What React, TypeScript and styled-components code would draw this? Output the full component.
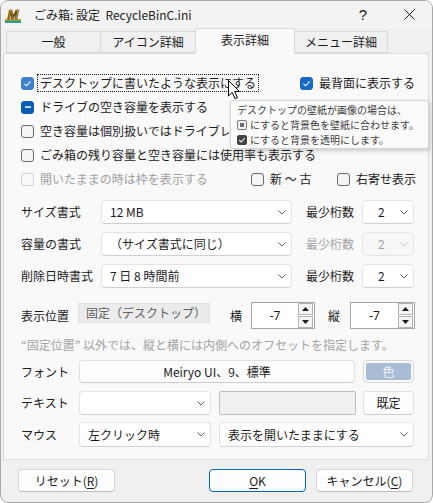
import React from "react";
import styled, { createGlobalStyle, css } from "styled-components";

const FONT = `"Noto Sans CJK JP", "Noto Sans", sans-serif`;

const Global = createGlobalStyle`
  html, body { margin: 0; padding: 0; background: #ffffff; }
  body { font-family: ${FONT}; font-size: 12px; color: #1b1b1b; }
  * { box-sizing: border-box; }
`;

const Window = styled.div`
  position: relative;
  width: 433px;
  height: 503px;
  background: #f0f0f0;
  border: 1px solid #a9a9a9;
  border-radius: 8px;
  display: flex;
  flex-direction: column;
  overflow: hidden;
`;

const TitleBar = styled.div`
  height: 27px;
  flex: none;
  display: flex;
  align-items: center;
  padding-left: 4px;
  background: #f3f3f3;
`;

const TitleText = styled.span`
  margin-left: 13px;
  white-space: pre;
  font-size: 12px;
  line-height: 16px;
  color: #1b1b1b;
`;

const Spacer = styled.div`
  flex: 1;
`;

const CaptionButton = styled.div`
  width: 46px;
  height: 27px;
  display: flex;
  align-items: center;
  justify-content: center;
  font-family: "Liberation Sans", sans-serif;
  font-size: 15px;
  color: #1b1b1b;
`;

const TabStrip = styled.div`
  height: 25px;
  flex: none;
  display: flex;
  align-items: flex-end;
  padding-left: 5px;
`;

const Tab = styled.div<{ $active?: boolean; $w: number }>`
  position: relative;
  width: ${(p) => p.$w}px;
  height: ${(p) => (p.$active ? 26 : 22)}px;
  margin-bottom: ${(p) => (p.$active ? -1 : 0)}px;
  z-index: ${(p) => (p.$active ? 2 : 1)};
  background: ${(p) => (p.$active ? "#f9f9f9" : "#f0f0f0")};
  border: 1px solid #d9d9d9;
  border-bottom: ${(p) => (p.$active ? "none" : "1px solid #d9d9d9")};
  display: flex;
  align-items: center;
  justify-content: center;
  padding-bottom: ${(p) => (p.$active ? 3 : 0)}px;
  font-size: 12px;
  line-height: 16px;
  color: #1b1b1b;
  & + & {
    margin-left: -1px;
  }
`;

const Panel = styled.div`
  position: relative;
  z-index: 1;
  margin: 0 3px 0 2px;
  height: 407px;
  flex: none;
  background: #f9f9f9;
  border: 1px solid #dcdcdc;
  padding: 17px 13px 0 17px;
  display: flex;
  flex-direction: column;
`;

const CheckRow = styled.div<{ $cols?: string; $clip?: number }>`
  height: 24px;
  display: grid;
  grid-template-columns: ${(p) => p.$cols || "auto"};
  align-items: center;
  white-space: nowrap;
  ${(p) =>
    p.$clip
      ? css`
          width: ${p.$clip}px;
          overflow: hidden;
        `
      : ""}
`;

const CheckItem = styled.div`
  display: flex;
  align-items: center;
  min-width: 0;
`;

type BoxState = "on" | "mixed" | "off";

const Box = styled.span<{ $state: BoxState; $tone?: string; $disabled?: boolean }>`
  width: 13px;
  height: 13px;
  flex: none;
  border-radius: 3px;
  display: inline-flex;
  align-items: center;
  justify-content: center;
  ${(p) =>
    p.$state === "off"
      ? css`
          background: ${p.$disabled ? "#f9f9f9" : "#f4f4f4"};
          border: 1px solid ${p.$disabled ? "#cfcfcf" : "#6a6a6a"};
        `
      : css`
          background: ${p.$tone || "#005fb8"};
          border: 1px solid ${p.$tone || "#005fb8"};
        `}
`;

const CheckText = styled.span<{ $focus?: boolean; $disabled?: boolean }>`
  margin-left: 3px;
  padding: 0 2px;
  border: 1px dotted ${(p) => (p.$focus ? "#1b1b1b" : "transparent")};
  line-height: 16px;
  color: ${(p) => (p.$disabled ? "#a0a0a0" : "#1b1b1b")};
`;

const Mark = ({ state }: { state: BoxState }) =>
  state === "on" ? (
    <svg width="9" height="9" viewBox="0 0 9 9">
      <polyline points="1.5,4.8 3.6,6.8 7.6,2.4" fill="none" stroke="#ffffff" strokeWidth="1.1" />
    </svg>
  ) : state === "mixed" ? (
    <svg width="8" height="8" viewBox="0 0 8 8">
      <rect x="1" y="3.3" width="6" height="1.5" fill="#ffffff" />
    </svg>
  ) : null;

const Check = ({
  state,
  tone,
  disabled,
  focus,
  children,
}: {
  state: BoxState;
  tone?: string;
  disabled?: boolean;
  focus?: boolean;
  children: React.ReactNode;
}) => (
  <CheckItem>
    <Box $state={state} $tone={tone} $disabled={disabled}>
      <Mark state={state} />
    </Box>
    <CheckText $focus={focus} $disabled={disabled}>
      {children}
    </CheckText>
  </CheckItem>
);

const FieldRow = styled.div<{ $mt: number; $h?: number }>`
  display: flex;
  align-items: center;
  margin-top: ${(p) => p.$mt}px;
  height: ${(p) => p.$h || 24}px;
  white-space: nowrap;
`;

const Label = styled.span<{ $w?: number; $ml?: number; $disabled?: boolean }>`
  flex: none;
  width: ${(p) => (p.$w ? `${p.$w}px` : "auto")};
  margin-left: ${(p) => p.$ml || 0}px;
  line-height: 16px;
  color: ${(p) => (p.$disabled ? "#a3a3a3" : "#1b1b1b")};
`;

const SelectBox = styled.div<{ $w: number; $ml?: number; $disabled?: boolean; $pad?: number }>`
  flex: none;
  width: ${(p) => p.$w}px;
  height: 100%;
  margin-left: ${(p) => p.$ml || 0}px;
  background: ${(p) => (p.$disabled ? "#f6f6f6" : "#ffffff")};
  border: 1px solid #e3e3e3;
  border-bottom-color: ${(p) => (p.$disabled ? "#e3e3e3" : "#d0d0d0")};
  border-radius: 4px;
  display: flex;
  align-items: center;
  padding: 0 5px 0 ${(p) => p.$pad ?? 8}px;
  color: ${(p) => (p.$disabled ? "#a3a3a3" : "#1b1b1b")};
  line-height: 16px;
`;

const SelectValue = styled.span`
  flex: 1;
  overflow: hidden;
`;

const Chevron = ({ light }: { light?: boolean }) => (
  <svg width="8" height="5" viewBox="0 0 8 5" style={{ flex: "none" }}>
    <polyline points="0.5,0.5 4,4 7.5,0.5" fill="none" stroke={light ? "#c4c4c4" : "#5f5f5f"} strokeWidth="1" />
  </svg>
);

const Select = ({
  w,
  ml,
  disabled,
  pad,
  children,
}: {
  w: number;
  ml?: number;
  disabled?: boolean;
  pad?: number;
  children?: React.ReactNode;
}) => (
  <SelectBox $w={w} $ml={ml} $disabled={disabled} $pad={pad}>
    <SelectValue>{children}</SelectValue>
    <Chevron light={disabled} />
  </SelectBox>
);

const ReadOnlyField = styled.div`
  flex: none;
  width: 132px;
  height: 20px;
  align-self: flex-start;
  margin-top: 1px;
  background: #ebebeb;
  border: 1px solid #e0e0e0;
  display: flex;
  align-items: center;
  padding-left: 7px;
  color: #606060;
  line-height: 16px;
`;

const SpinBox = styled.div<{ $w: number; $ml: number }>`
  flex: none;
  width: ${(p) => p.$w}px;
  height: 27px;
  margin-left: ${(p) => p.$ml}px;
  background: #ffffff;
  border: 1px solid #a6a6a6;
  display: flex;
`;

const SpinValue = styled.span`
  flex: 1;
  display: flex;
  align-items: center;
  justify-content: center;
  font-family: "Noto Sans", sans-serif;
  font-size: 12px;
`;

const SpinButtons = styled.div`
  width: 16px;
  flex: none;
  display: flex;
  flex-direction: column;
  gap: 1px;
  padding: 0 1px 0 0;
`;

const SpinBtn = styled.div`
  flex: 1;
  background: #f4f4f4;
  border: 1px solid #b4b4b4;
  display: flex;
  align-items: center;
  justify-content: center;
`;

const Arrow = ({ up }: { up?: boolean }) => (
  <svg width="7" height="4" viewBox="0 0 7 4">
    <polygon points={up ? "0,4 3.5,0 7,4" : "0,0 3.5,4 7,0"} fill="#1b1b1b" />
  </svg>
);

const Spin = ({ w, ml, value }: { w: number; ml: number; value: string }) => (
  <SpinBox $w={w} $ml={ml}>
    <SpinValue>{value}</SpinValue>
    <SpinButtons>
      <SpinBtn>
        <Arrow up />
      </SpinBtn>
      <SpinBtn>
        <Arrow />
      </SpinBtn>
    </SpinButtons>
  </SpinBox>
);

const Hint = styled.div`
  margin-top: 8px;
  line-height: 16px;
  color: #a3a3a3;
  white-space: nowrap;
`;

const PushButton = styled.div<{ $w: number; $ml?: number; $focus?: boolean }>`
  flex: none;
  width: ${(p) => p.$w}px;
  height: 100%;
  margin-left: ${(p) => p.$ml || 0}px;
  background: #fdfdfd;
  border: 1px solid ${(p) => (p.$focus ? "#0067c0" : "#e0e0e0")};
  border-bottom-color: ${(p) => (p.$focus ? "#0067c0" : "#cccccc")};
  border-radius: 4px;
  display: flex;
  align-items: center;
  justify-content: center;
  line-height: 16px;
  color: #1b1b1b;
`;

const ColorButton = styled.div`
  flex: none;
  width: 51px;
  height: 100%;
  margin-left: 8px;
  border: 1px solid #d6d6d6;
  border-radius: 4px;
  padding: 2px;
  display: flex;
`;

const ColorFill = styled.div`
  flex: 1;
  background: #a8bcd5;
  border-radius: 2px;
  display: flex;
  align-items: center;
  justify-content: center;
  color: #f4f6fa;
  line-height: 16px;
`;

const GreyField = styled.div`
  flex: none;
  width: 137px;
  height: 100%;
  margin-left: 8px;
  background: #f0f0f0;
  border: 1px solid #bdbdbd;
  border-radius: 2px;
`;

const Footer = styled.div`
  flex: 1;
  display: flex;
  align-items: center;
  padding: 0 19px 1px 17px;
`;

const FooterGroup = styled.div`
  margin-left: auto;
  display: flex;
  gap: 10px;
`;

const DialogButton = styled.div<{ $focus?: boolean }>`
  width: 97px;
  height: 23px;
  background: #fdfdfd;
  border: 1px solid ${(p) => (p.$focus ? "#0067c0" : "#d5d5d5")};
  border-bottom-color: ${(p) => (p.$focus ? "#0067c0" : "#bcbcbc")};
  border-radius: 4px;
  display: flex;
  align-items: center;
  justify-content: center;
  line-height: 16px;
  color: #1b1b1b;
  u {
    text-decoration: underline;
    text-underline-offset: 2px;
  }
`;

const Tooltip = styled.div`
  position: absolute;
  left: 229px;
  top: 99px;
  width: 199px;
  height: 49px;
  z-index: 5;
  background: #fbfbfb;
  border: 1px solid #d4d4d4;
  border-radius: 3px;
  box-shadow: 1px 2px 4px rgba(0, 0, 0, 0.18);
  padding: 1px 0 0 6px;
  font-size: 10px;
  line-height: 15px;
  color: #3e3e3e;
  white-space: nowrap;
`;

const TipLine = styled.div`
  display: flex;
  align-items: center;
  height: 15px;
`;

const TipBox = styled.span<{ $dark?: boolean }>`
  width: 10px;
  height: 10px;
  margin-right: 3px;
  flex: none;
  border-radius: 2px;
  border: 1px solid ${(p) => (p.$dark ? "#444444" : "#7a7a7a")};
  background: ${(p) => (p.$dark ? "#444444" : "#f4f4f4")};
  display: inline-flex;
  align-items: center;
  justify-content: center;
`;

const TipInner = styled.span`
  width: 4px;
  height: 4px;
  background: #6a6a6a;
`;

const Cursor = styled.svg`
  position: absolute;
  left: 227px;
  top: 79px;
  z-index: 6;
`;

const AppIcon = () => (
  <svg width="16" height="16" viewBox="0 0 16 16">
    <rect x="0" y="12" width="16" height="4" fill="#2f9e8a" />
    <rect x="0" y="12" width="16" height="1.4" fill="#e39a1a" />
    <text
      x="8"
      y="12"
      textAnchor="middle"
      fontFamily="Liberation Sans, sans-serif"
      fontWeight="bold"
      fontStyle="italic"
      fontSize="13"
      fill="#f4b418"
      stroke="#3a2800"
      strokeWidth="0.7"
    >
      M
    </text>
  </svg>
);

export default function App() {
  return (
    <>
      <Global />
      <Window>
        <TitleBar>
          <AppIcon />
          <TitleText>{"ごみ箱: 設定  RecycleBinC.ini"}</TitleText>
          <Spacer />
          <CaptionButton>?</CaptionButton>
          <CaptionButton>
            <svg width="11" height="11" viewBox="0 0 11 11">
              <path d="M0.5 0.5 L10.5 10.5 M10.5 0.5 L0.5 10.5" stroke="#1b1b1b" strokeWidth="1" />
            </svg>
          </CaptionButton>
        </TitleBar>

        <TabStrip>
          <Tab $w={95}>一般</Tab>
          <Tab $w={96}>アイコン詳細</Tab>
          <Tab $w={100} $active>
            表示詳細
          </Tab>
          <Tab $w={94}>メニュー詳細</Tab>
        </TabStrip>

        <Panel>
          <CheckRow $cols="279px auto">
            <Check state="on" tone="#3f80cd" focus>
              デスクトップに書いたような表示にする
            </Check>
            <Check state="on" tone="#1769c4">
              最背面に表示する
            </Check>
          </CheckRow>
          <CheckRow>
            <Check state="mixed" tone="#0a5db3">
              ドライブの空き容量を表示する
            </Check>
          </CheckRow>
          <CheckRow $clip={208}>
            <Check state="off">空き容量は個別扱いではドライブレターごとに表示する</Check>
          </CheckRow>
          <CheckRow>
            <Check state="off">ごみ箱の残り容量と空き容量には使用率も表示する</Check>
          </CheckRow>
          <CheckRow $cols="230px 86px auto">
            <Check state="off" disabled>
              開いたままの時は枠を表示する
            </Check>
            <Check state="off">新 ～ 古</Check>
            <Check state="off">右寄せ表示</Check>
          </CheckRow>

          <FieldRow $mt={9}>
            <Label $w={80}>サイズ書式</Label>
            <Select w={191}>12 MB</Select>
            <Label $w={48} $ml={14}>
              最少桁数
            </Label>
            <Select w={52} ml={8} pad={15}>
              2
            </Select>
          </FieldRow>
          <FieldRow $mt={8}>
            <Label $w={80}>容量の書式</Label>
            <Select w={191}>（サイズ書式に同じ）</Select>
            <Label $w={48} $ml={14} $disabled>
              最少桁数
            </Label>
            <Select w={52} ml={8} pad={15} disabled>
              2
            </Select>
          </FieldRow>
          <FieldRow $mt={8}>
            <Label $w={80}>削除日時書式</Label>
            <Select w={191}>7 日 8 時間前</Select>
            <Label $w={48} $ml={14}>
              最少桁数
            </Label>
            <Select w={52} ml={8} pad={15}>
              2
            </Select>
          </FieldRow>

          <FieldRow $mt={14} $h={27}>
            <Label $w={57}>表示位置</Label>
            <ReadOnlyField>固定（デスクトップ）</ReadOnlyField>
            <Label $w={12} $ml={20}>
              横
            </Label>
            <Spin w={64} ml={9} value="-7" />
            <Label $w={12} $ml={13}>
              縦
            </Label>
            <Spin w={65} ml={10} value="-7" />
          </FieldRow>
          <Hint>“固定位置” 以外では、縦と横には内側へのオフセットを指定します。</Hint>

          <FieldRow $mt={7} $h={23}>
            <Label $w={58}>フォント</Label>
            <PushButton $w={276}>Meiryo UI、9、標準</PushButton>
            <ColorButton>
              <ColorFill>色</ColorFill>
            </ColorButton>
          </FieldRow>
          <FieldRow $mt={8}>
            <Label $w={58}>テキスト</Label>
            <Select w={132} />
            <GreyField />
            <PushButton $w={51} $ml={7}>
              既定
            </PushButton>
          </FieldRow>
          <FieldRow $mt={7} $h={25}>
            <Label $w={58}>マウス</Label>
            <Select w={132}>左クリック時</Select>
            <Select w={195} ml={8}>
              表示を開いたままにする
            </Select>
          </FieldRow>
        </Panel>

        <Footer>
          <DialogButton>
            <span>
              リセット(<u>R</u>)
            </span>
          </DialogButton>
          <FooterGroup>
            <DialogButton $focus>
              <span>
                <u>O</u>K
              </span>
            </DialogButton>
            <DialogButton>
              <span>
                キャンセル(<u>C</u>)
              </span>
            </DialogButton>
          </FooterGroup>
        </Footer>

        <Tooltip>
          <TipLine>デスクトップの壁紙が画像の場合は、</TipLine>
          <TipLine>
            <TipBox>
              <TipInner />
            </TipBox>
            にすると背景色を壁紙に合わせます。
          </TipLine>
          <TipLine>
            <TipBox $dark>
              <svg width="8" height="8" viewBox="0 0 8 8">
                <polyline points="1.2,4.2 3.2,6 6.8,2" fill="none" stroke="#ffffff" strokeWidth="1.1" />
              </svg>
            </TipBox>
            にすると背景を透明にします。
          </TipLine>
        </Tooltip>

        <Cursor width="13" height="20" viewBox="0 0 13 20">
          <polygon
            points="0.5,0.5 0.5,16 4.2,12.4 7,18.6 9.4,17.6 6.7,11.5 11.5,11.5"
            fill="#ffffff"
            stroke="#000000"
            strokeWidth="1"
            strokeLinejoin="round"
          />
        </Cursor>
      </Window>
    </>
  );
}
